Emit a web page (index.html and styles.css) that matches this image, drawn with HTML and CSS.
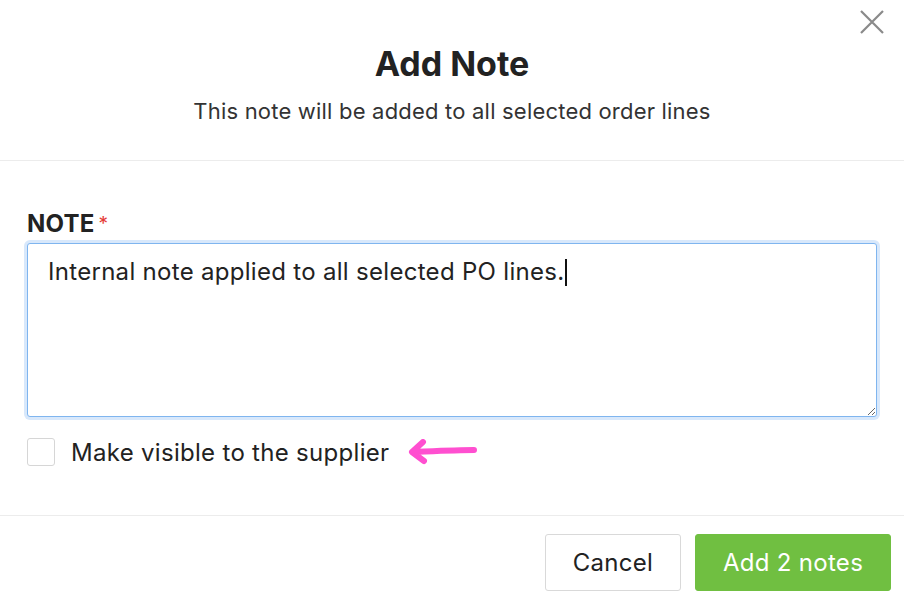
FILE: index.html
```html
<!DOCTYPE html>
<html>
<head>
<meta charset="utf-8">
<link rel="stylesheet" href="styles.css">
</head>
<body>
<div class="modal">
  <button class="close" aria-label="Close">
    <svg width="24" height="24" viewBox="0 0 24 24"><path d="M1 1 L23 23 M23 1 L1 23" stroke="#8a8a8a" stroke-width="2.2" fill="none"/></svg>
  </button>
  <header class="head">
    <h1 class="title">Add Note</h1>
    <p class="subtitle">This note will be added to all selected order lines</p>
  </header>
  <section class="body">
    <label class="label">NOTE<span class="req">*</span></label>
    <div class="field">
      <textarea class="note">Internal note applied to all selected PO lines.</textarea>
      <span class="caret"></span>
    </div>
    <div class="check-row">
      <span class="checkbox"></span>
      <span class="check-label">Make visible to the supplier</span>
      <svg class="arrow" width="72" height="30" viewBox="0 0 72 30"><path d="M67 11 C50 11 30 12 6 13 M16 3 L5 13 L17 22" stroke="#ff4fd0" stroke-width="6" stroke-linecap="round" stroke-linejoin="round" fill="none"/></svg>
    </div>
  </section>
  <footer class="foot">
    <button class="btn btn-cancel">Cancel</button>
    <button class="btn btn-primary">Add 2 notes</button>
  </footer>
</div>
</body>
</html>
```
FILE: styles.css
```css
* { box-sizing: border-box; }
html, body { margin: 0; padding: 0; background: #fff; }
body { font-family: Inter, "Noto Sans", sans-serif; color: #222; width: 904px; height: 600px; overflow: hidden; }
.modal { position: relative; width: 904px; height: 600px; }
.close { position: absolute; top: 10px; right: 20px; background: none; border: 0; padding: 0; width: 24px; height: 24px; cursor: pointer; }
.close svg { display: block; }
.head { height: 161px; border-bottom: 1px solid #ececec; text-align: center; padding-top: 44px; }
.title { margin: 0; font-size: 34px; font-weight: 700; line-height: 40px; color: #222; letter-spacing: 0; }
.subtitle { margin: 12px 0 0; font-size: 22px; line-height: 30px; color: #333; letter-spacing: 0.2px; }
.body { padding: 49px 27px 0; height: 355px; border-bottom: 1px solid #ececec; }
.label { display: block; font-size: 24px; font-weight: 700; line-height: 28px; color: #222; letter-spacing: 0.2px; }
.req { color: #e53935; font-weight: 400; font-size: 19px; margin-left: 4px; vertical-align: top; }
.field { position: relative; margin-top: 5px; }
.note { display: block; width: 850px; height: 174px; border: 1px solid #7fb5ef; border-radius: 3px; box-shadow: 0 0 0 3px #d8e8fb; outline: none; padding: 13px 20px; font-family: Inter, "Noto Sans", sans-serif; font-size: 24px; line-height: 30px; color: #222; resize: vertical; letter-spacing: 0.3px; }
.caret { position: absolute; left: 538px; top: 16px; width: 2px; height: 27px; background: #111; }
.check-row { display: flex; align-items: center; margin-top: 21px; height: 28px; }
.checkbox { width: 28px; height: 28px; border: 1px solid #d6d6d6; border-radius: 3px; background: #fff; }
.check-label { margin-left: 16px; font-size: 24px; color: #222; letter-spacing: 0.3px; }
.arrow { margin-left: 18px; margin-top: 4px; }
.foot { display: flex; justify-content: flex-end; gap: 14px; padding: 18px 13px 0; }
.btn { height: 57px; border-radius: 3px; font-family: Inter, "Noto Sans", sans-serif; font-size: 24px; padding: 0; cursor: pointer; letter-spacing: 0.3px; }
.btn-cancel { width: 136px; background: #fff; border: 1px solid #d9d9d9; color: #222; }
.btn-primary { width: 196px; background: #70bf41; border: 1px solid #70bf41; color: #fff; }
```
